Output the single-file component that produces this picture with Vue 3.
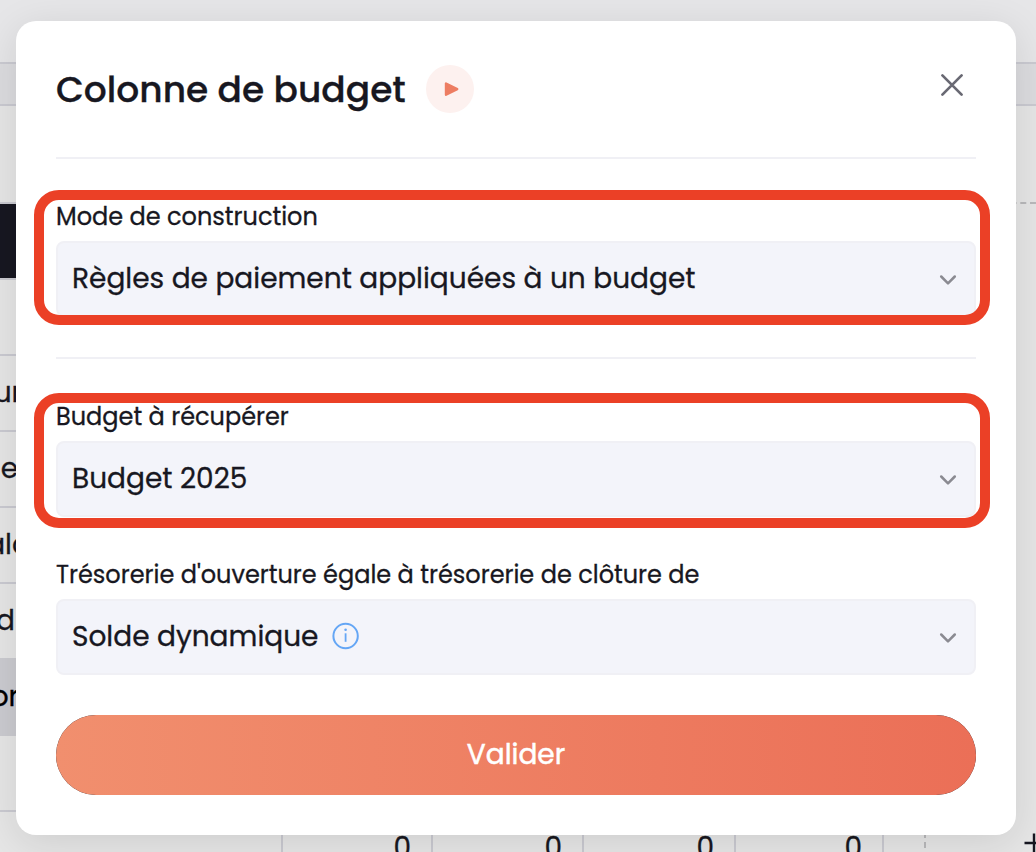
<template>
    <div class="page">
        <div class="backdrop" aria-hidden="true">
            <div class="top-bar"></div>
            <div class="toolbar"></div>
            <div class="sheet">
                <div class="sheet-table">
                    <div class="row-spacer"></div>
                    <div class="row-head"></div>
                    <div class="row-gap"></div>
                    <div v-for="row in rows" :key="row.text" class="row" :class="{ 'row-total': row.total }">
                        <span class="row-label" :style="{ width: row.end + 'px' }">{{ row.text }}</span>
                    </div>
                    <div class="row-after"></div>
                </div>
                <div class="sheet-side"></div>
            </div>
            <div class="bottom-row">
                <div class="cell cell-first"></div>
                <div v-for="cell in cells" :key="cell.id" class="cell" :style="{ width: cell.width + 'px' }">0</div>
                <div class="cell-dashed"></div>
                <svg class="plus" width="20" height="20" viewBox="0 0 20 20">
                    <path d="M0.5 10H19.5M10 0.5V19.5" stroke="#171721" stroke-width="2.4" />
                </svg>
            </div>
        </div>

        <div class="modal" role="dialog">
            <header class="modal-header">
                <h1 class="modal-title">Colonne de budget</h1>
                <button class="play-btn" title="Voir la vidéo">
                    <svg width="48" height="48" viewBox="0 0 48 48">
                        <path d="M20 18.5v11.2L31.2 24.1z" fill="#ed7d62" stroke="#ed7d62" stroke-width="2.4"
                            stroke-linejoin="round" />
                    </svg>
                </button>
                <button class="close-btn" title="Fermer" @click="close">
                    <svg width="24" height="24" viewBox="0 0 24 24">
                        <path d="M2.4 2.4L21.6 21.6M21.6 2.4L2.4 21.6" stroke="#696973" stroke-width="2.7"
                            stroke-linecap="round" />
                    </svg>
                </button>
            </header>

            <template v-for="field in fields" :key="field.id">
                <hr v-if="field.divider" class="divider">
                <div class="field" :class="`field-${field.id}`">
                    <label class="field-label">{{ field.label }}</label>
                    <div class="select">
                        <span class="select-value">{{ field.value }}</span>
                        <svg v-if="field.info" class="info-icon" width="28" height="28" viewBox="0 0 28 28">
                            <circle cx="13.6" cy="14" r="12.2" fill="none" stroke="#64a6f5" stroke-width="2" />
                            <path d="M13.6 11.3V19.8" stroke="#64a6f5" stroke-width="1.8" />
                            <circle cx="13.6" cy="7.8" r="1.3" fill="#64a6f5" />
                        </svg>
                        <svg class="chevron" width="18" height="12" viewBox="0 0 18 12">
                            <path d="M2.2 2.5L9 9.3L15.8 2.5" fill="none" stroke="#8a8a91" stroke-width="2.5"
                                stroke-linecap="round" stroke-linejoin="round" />
                        </svg>
                    </div>
                    <div v-if="field.highlight" class="highlight"></div>
                </div>
            </template>

            <button class="submit-btn"><span class="submit-label">Valider</span></button>
        </div>
    </div>
</template>

<script setup>
import { ref } from 'vue'

const emit = defineEmits(['close'])

const fields = ref([
    {
        id: 'mode',
        label: 'Mode de construction',
        value: 'Règles de paiement appliquées à un budget',
        divider: true,
        highlight: true
    },
    {
        id: 'budget',
        label: 'Budget à récupérer',
        value: 'Budget 2025',
        divider: true,
        highlight: true
    },
    {
        id: 'solde',
        label: "Trésorerie d'ouverture égale à trésorerie de clôture de",
        value: 'Solde dynamique',
        info: true
    }
])

// Sheet rows behind the modal, only the end of each label stays visible
const rows = [
    { text: 'ur', end: 22 },
    { text: 'e', end: 18 },
    { text: 'alc', end: 29 },
    { text: 'd', end: 15 },
    { text: 'or', end: 19, total: true }
]

const cells = [
    { id: 1, width: 150 },
    { id: 2, width: 151 },
    { id: 3, width: 152 },
    { id: 4, width: 148 }
]

const close = () => {
    emit('close')
}
</script>

<style>
body {
    margin: 0;
    overflow: hidden;
}
</style>

<style scoped>
.page {
    position: relative;
    box-sizing: border-box;
    width: 1036px;
    height: 852px;
    padding: 21px 20px 0 16px;
    overflow: hidden;
    background: #e6e6e6;
    color: #171721;
    font-family: "Poppins", "Inter", "Noto Sans", sans-serif;
    -webkit-text-stroke: 0.3px currentColor;
}

.page * {
    box-sizing: border-box;
}

/* Sheet behind the modal */
.backdrop {
    position: absolute;
    inset: 0;
    display: flex;
    flex-direction: column;
    font-size: 28px;
}

.backdrop > * {
    flex-shrink: 0;
}

.top-bar {
    height: 62px;
    background: #e6e6e8;
}

.toolbar {
    height: 44px;
    background: #dcdcdf;
    border-top: 2px solid #cacad1;
    border-bottom: 2px solid #cacad1;
}

.sheet {
    display: flex;
    height: 706px;
}

.sheet-table {
    width: 884px;
    overflow: hidden;
    border-bottom: 2px solid #cacad1;
}

.row-spacer {
    height: 96px;
}

.row-head {
    height: 78px;
    background: #171721;
    border-top: 2px solid #cacad1;
    border-bottom: 2px solid #cacad1;
}

.row-gap {
    height: 74px;
}

.row {
    height: 76px;
    border-top: 2px solid #cacad1;
    line-height: 74px;
}

.row-total {
    height: 78px;
    border-top: 0;
    background: #cbcbd0;
    color: #000;
    line-height: 78px;
}

.row-label {
    display: flex;
    justify-content: flex-end;
}

.row-after {
    height: 74px;
}

.sheet-side {
    flex: 1;
    height: 98px;
    border-bottom: 2px dashed #b9b9bb;
}

.bottom-row {
    display: flex;
    height: 76px;
}

.cell {
    flex-shrink: 0;
    padding-right: 20px;
    border-right: 2px solid #cacad1;
    line-height: 72px;
    text-align: right;
}

.cell-first {
    width: 283px;
}

.cell-dashed {
    flex-shrink: 0;
    width: 42px;
    border-right: 2px dashed #b9b9bb;
}

.plus {
    flex-shrink: 0;
    margin: 21px 0 0 98px;
}

/* Modal */
.modal {
    position: relative;
    display: flex;
    flex-direction: column;
    height: 814px;
    padding: 0 40px 40px;
    background: #fff;
    border-radius: 20px;
    box-shadow: 0 8px 40px rgba(0, 0, 0, 0.11);
}

.modal-header {
    display: flex;
    align-items: center;
    height: 136px;
}

.modal-title {
    width: 350px;
    margin: 0;
    padding-top: 2px;
    font-size: 36px;
    font-weight: 500;
    line-height: 54px;
    white-space: nowrap;
}

button {
    border: 0;
    padding: 0;
    cursor: pointer;
    font-family: inherit;
}

.play-btn {
    width: 48px;
    height: 48px;
    margin-left: 20px;
    border-radius: 50%;
    background: #fdf1ef;
}

.play-btn svg,
.close-btn svg {
    display: block;
}

.close-btn {
    width: 24px;
    height: 24px;
    margin: -8px 12px 0 auto;
    background: none;
}

.divider {
    width: 100%;
    height: 2px;
    margin: 0 0 40px;
    border: 0;
    background: #f0f0f5;
}

.field {
    position: relative;
    margin-bottom: 40px;
}

.field-label {
    display: block;
    height: 36px;
    margin-bottom: 6px;
    font-size: 24px;
    line-height: 36px;
    white-space: nowrap;
}

.select {
    display: flex;
    align-items: center;
    height: 76px;
    padding: 0 17px 0 14px;
    background: #f3f4fa;
    border: 2px solid #f0f0f5;
    border-radius: 8px;
}

.select-value {
    font-size: 28px;
    line-height: 40px;
    white-space: nowrap;
}

.info-icon {
    margin: -2px 0 0 13px;
}

.chevron {
    margin: 2px 0 0 auto;
}

.highlight {
    position: absolute;
    inset: -9px -14px -8px -22px;
    border: 10px solid #eb4026;
    border-radius: 25px;
    pointer-events: none;
}

.field-budget .highlight {
    top: -6px;
    bottom: -11px;
}

.submit-btn {
    height: 80px;
    border-radius: 40px;
    background: #171721;
    color: #fff;
    font-size: 28px;
    -webkit-text-stroke: 0.5px currentColor;
}

.submit-label {
    display: block;
    height: 80px;
    border-radius: 40px;
    background: linear-gradient(90deg, #f18f6e 0%, #eb6f57 100%);
    line-height: 80px;
}
</style>
